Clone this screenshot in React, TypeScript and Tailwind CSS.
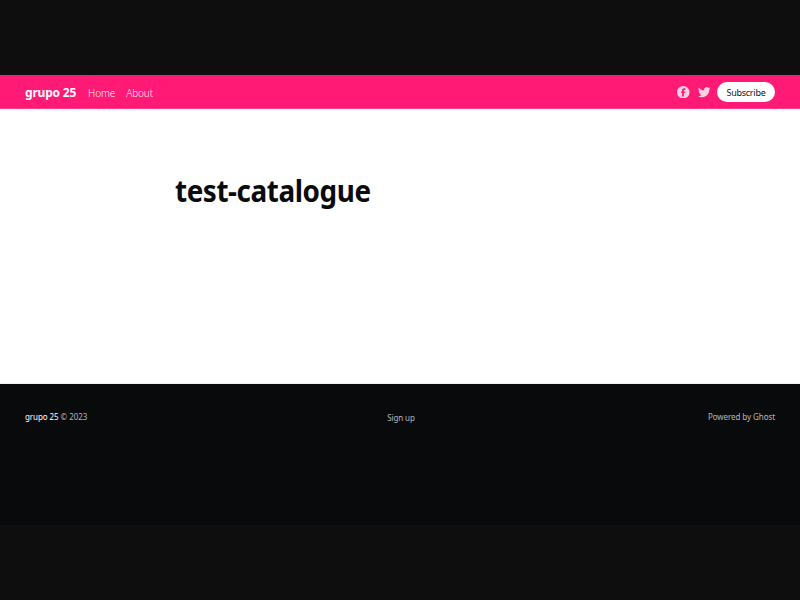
export default function App() {
  return (
    <div className="flex h-[600px] w-[800px] flex-col overflow-hidden bg-[#0e0e0e] pt-[75px] font-['Noto_Sans',sans-serif]">
      <header className="flex h-[34px] shrink-0 items-center justify-between border-b border-[#ff3888] bg-[#ff1a75] px-[25px] text-white">
        <div className="flex items-center pt-[3px]">
          <a className="w-[63px] whitespace-nowrap text-[12px] font-bold tracking-[-0.2px]">grupo 25</a>
          <nav className="flex gap-[11px] text-[10px] font-light tracking-[-0.1px] text-white/95">
            <a>Home</a>
            <a>About</a>
          </nav>
        </div>
        <div className="flex items-center pt-px">
          <svg className="mr-[8px] size-[12.5px] fill-white/80" viewBox="0 0 32 32">
            <path d="M16 0a16 16 0 1 0 0 32 16 16 0 0 0 0-32zm5.300 10.100h-2.200c-1.300 0-1.600.6-1.600 1.500v2.500h3.700l-.4 3.800h-3.300v9h-4.500v-9h-2.600v-3.800H13v-2.900c0-3.300 1.700-5.200 5-5.200h3.300v4.100z" />
          </svg>
          <svg className="mr-[7px] size-[12.5px] fill-white/80" viewBox="0 0 24 24">
            <path d="M23.954 4.569a10 10 0 0 1-2.825.775 4.958 4.958 0 0 0 2.163-2.723c-.951.555-2.005.959-3.127 1.184a4.920 4.920 0 0 0-8.384 4.482C7.691 8.094 4.066 6.130 1.640 3.161a4.822 4.822 0 0 0-.666 2.475c0 1.710.870 3.213 2.188 4.096a4.904 4.904 0 0 1-2.228-.616v.061a4.923 4.923 0 0 0 3.946 4.827 4.996 4.996 0 0 1-2.212.085 4.937 4.937 0 0 0 4.604 3.417 9.868 9.868 0 0 1-6.102 2.105c-.390 0-.779-.023-1.170-.067a13.995 13.995 0 0 0 7.557 2.209c9.054 0 13.999-7.496 13.999-13.986 0-.209 0-.420-.015-.630a9.936 9.936 0 0 0 2.460-2.548z" />
          </svg>
          <a className="flex h-5 w-[58px] items-center justify-center rounded-full bg-white pt-px text-[9px] tracking-[-0.25px] text-[#15171a]">Subscribe</a>
        </div>
      </header>
      <main className="h-[275px] shrink-0 border-b border-[#f1f1f1] bg-white px-[175px] pt-[62px]">
        <h1 className="origin-left scale-x-[0.928] text-[30px] leading-[40px] font-bold tracking-[-0.45px] text-[#0a0b0c]">test-catalogue</h1>
      </main>
      <footer className="grid h-[141px] shrink-0 grid-cols-3 bg-[#090a0c] px-[25px] pt-[26px] text-[8px] leading-[13px] text-white/70">
        <div className="tracking-[-0.07px]"><span className="text-white">grupo 25</span> © 2023</div>
        <a className="pt-px pl-[2px] text-center tracking-[-0.1px]">Sign up</a>
        <div className="text-right tracking-[-0.07px]">Powered by Ghost</div>
      </footer>
    </div>
  );
}
